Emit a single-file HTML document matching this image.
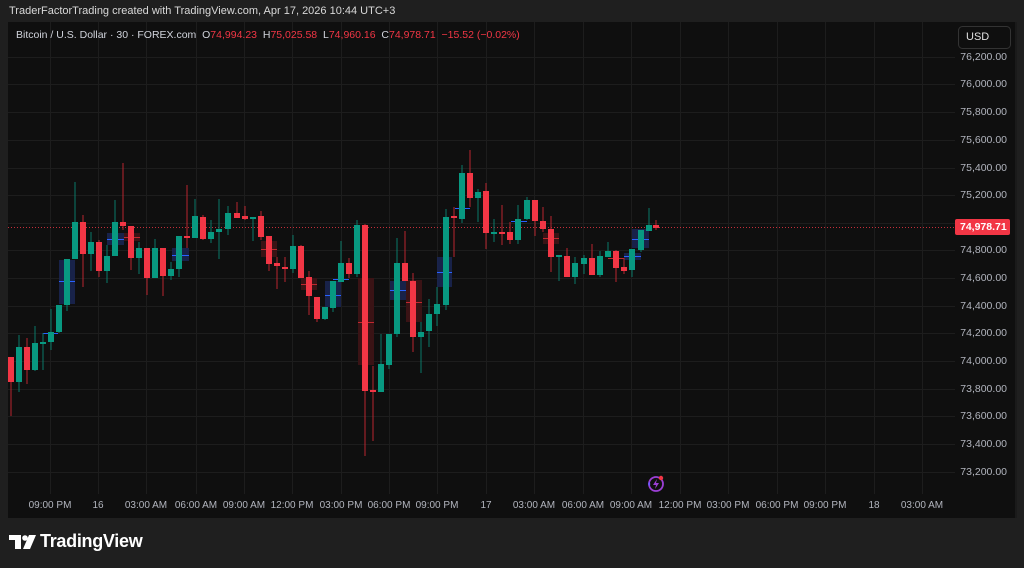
<!DOCTYPE html>
<html><head><meta charset="utf-8"><style>
html,body{margin:0;padding:0;width:1024px;height:568px;background:#1f1f1f;overflow:hidden;font-family:"Liberation Sans",sans-serif}
.t{position:absolute;white-space:nowrap}
</style></head><body>
<div class="t" style="left:9px;top:5px;font-size:11px;color:#d8d8d8">TraderFactorTrading created with TradingView.com, Apr 17, 2026 10:44 UTC+3</div>
<svg style="position:absolute;left:0;top:0" width="1024" height="568">
<rect x="8" y="22" width="1007" height="496" fill="#0f0f0f"/>
<rect x="1015" y="22" width="2" height="496" fill="#1a1a1a"/>
<g stroke="#1d1d1d" stroke-width="1">
<line x1="8" y1="57.5" x2="955" y2="57.5"/><line x1="8" y1="84.5" x2="955" y2="84.5"/><line x1="8" y1="112.5" x2="955" y2="112.5"/><line x1="8" y1="140.5" x2="955" y2="140.5"/><line x1="8" y1="168.5" x2="955" y2="168.5"/><line x1="8" y1="195.5" x2="955" y2="195.5"/><line x1="8" y1="223.5" x2="955" y2="223.5"/><line x1="8" y1="250.5" x2="955" y2="250.5"/><line x1="8" y1="278.5" x2="955" y2="278.5"/><line x1="8" y1="306.5" x2="955" y2="306.5"/><line x1="8" y1="333.5" x2="955" y2="333.5"/><line x1="8" y1="361.5" x2="955" y2="361.5"/><line x1="8" y1="389.5" x2="955" y2="389.5"/><line x1="8" y1="416.5" x2="955" y2="416.5"/><line x1="8" y1="444.5" x2="955" y2="444.5"/><line x1="8" y1="472.5" x2="955" y2="472.5"/>
<line x1="50.5" y1="22" x2="50.5" y2="494"/><line x1="98.5" y1="22" x2="98.5" y2="494"/><line x1="146.5" y1="22" x2="146.5" y2="494"/><line x1="196.5" y1="22" x2="196.5" y2="494"/><line x1="244.5" y1="22" x2="244.5" y2="494"/><line x1="292.5" y1="22" x2="292.5" y2="494"/><line x1="341.5" y1="22" x2="341.5" y2="494"/><line x1="389.5" y1="22" x2="389.5" y2="494"/><line x1="437.5" y1="22" x2="437.5" y2="494"/><line x1="486.5" y1="22" x2="486.5" y2="494"/><line x1="534.5" y1="22" x2="534.5" y2="494"/><line x1="583.5" y1="22" x2="583.5" y2="494"/><line x1="631.5" y1="22" x2="631.5" y2="494"/><line x1="680.5" y1="22" x2="680.5" y2="494"/><line x1="728.5" y1="22" x2="728.5" y2="494"/><line x1="777.5" y1="22" x2="777.5" y2="494"/><line x1="825.5" y1="22" x2="825.5" y2="494"/><line x1="874.5" y1="22" x2="874.5" y2="494"/><line x1="922.5" y1="22" x2="922.5" y2="494"/>
</g>
<!-- boxes -->
<g fill="#1a2550" opacity="0.9">
<rect x="59" y="260" width="16" height="44"/><rect x="107" y="233" width="17" height="12"/><rect x="172" y="248" width="17" height="13"/><rect x="325" y="281" width="16" height="26"/><rect x="390" y="281" width="16" height="19"/><rect x="437" y="257" width="15" height="30"/><rect x="624" y="253" width="17" height="7"/><rect x="632" y="229" width="17" height="19"/>
</g>
<g fill="#2962ff">
<rect x="59" y="281" width="16" height="1"/><rect x="107" y="239" width="17" height="1"/><rect x="172" y="255" width="17" height="1"/><rect x="325" y="295" width="16" height="1"/><rect x="390" y="290" width="16" height="1"/><rect x="437" y="272" width="15" height="1"/><rect x="624" y="256" width="17" height="1"/><rect x="632" y="239" width="17" height="1"/><rect x="333" y="279" width="16" height="1"/><rect x="455" y="208" width="15" height="1"/><rect x="511" y="221" width="16" height="1"/><rect x="43" y="333" width="15" height="1"/>
</g>
<g fill="#3a1315">
<rect x="124" y="233" width="16" height="8"/><rect x="261" y="241" width="16" height="16"/><rect x="301" y="278" width="16" height="12"/><rect x="358" y="278" width="16" height="87"/><rect x="406" y="280" width="16" height="42"/><rect x="543" y="233" width="16" height="11"/>
</g>
<g fill="#c0282f">
<rect x="124" y="237" width="16" height="1"/><rect x="261" y="249" width="16" height="1"/><rect x="301" y="284" width="16" height="1"/><rect x="358" y="322" width="16" height="1"/><rect x="406" y="302" width="16" height="1"/><rect x="543" y="238" width="16" height="1"/><rect x="608" y="258" width="16" height="1"/>
</g>
<line x1="8" y1="227.5" x2="955" y2="227.5" stroke="#f23645" stroke-width="1" stroke-dasharray="1,2" opacity="0.8"/>
<!-- green wicks -->
<g fill="#0a7a68">
<rect x="18.5" y="335" width="1" height="57"/><rect x="34.5" y="326" width="1" height="45"/><rect x="42.5" y="333" width="1" height="37"/><rect x="50.5" y="309" width="1" height="41"/><rect x="58.5" y="305" width="1" height="28"/><rect x="66.5" y="259" width="1" height="52"/><rect x="74.5" y="182" width="1" height="77"/><rect x="90.5" y="232" width="1" height="39"/><rect x="106.5" y="245" width="1" height="38"/><rect x="114.5" y="200" width="1" height="56"/><rect x="138.5" y="242" width="1" height="32"/><rect x="154.5" y="239" width="1" height="39"/><rect x="170.5" y="262" width="1" height="18"/><rect x="178.5" y="236" width="1" height="41"/><rect x="194.5" y="199" width="1" height="39"/><rect x="210.5" y="220" width="1" height="23"/><rect x="218.5" y="199" width="1" height="60"/><rect x="227.5" y="206" width="1" height="29"/><rect x="252.5" y="217" width="1" height="24"/><rect x="292.5" y="235" width="1" height="38"/><rect x="324.5" y="307" width="1" height="13"/><rect x="332.5" y="281" width="1" height="31"/><rect x="340.5" y="241" width="1" height="41"/><rect x="356.5" y="220" width="1" height="57"/><rect x="380.5" y="334" width="1" height="58"/><rect x="388.5" y="334" width="1" height="35"/><rect x="396.5" y="238" width="1" height="99"/><rect x="420.5" y="322" width="1" height="51"/><rect x="428.5" y="299" width="1" height="48"/><rect x="436.5" y="287" width="1" height="39"/><rect x="445.5" y="209" width="1" height="101"/><rect x="461.5" y="165" width="1" height="58"/><rect x="477.5" y="189" width="1" height="33"/><rect x="493.5" y="219" width="1" height="23"/><rect x="517.5" y="205" width="1" height="39"/><rect x="526.5" y="197" width="1" height="23"/><rect x="558.5" y="256" width="1" height="25"/><rect x="574.5" y="257" width="1" height="27"/><rect x="583.5" y="255" width="1" height="19"/><rect x="599.5" y="251" width="1" height="26"/><rect x="607.5" y="242" width="1" height="15"/><rect x="631.5" y="249" width="1" height="28"/><rect x="640.5" y="230" width="1" height="22"/><rect x="648.5" y="208" width="1" height="23"/>
</g>
<g fill="#089981">
<rect x="16" y="347" width="6" height="35"/><rect x="32" y="343" width="6" height="27"/><rect x="40" y="342" width="6" height="2"/><rect x="48" y="332" width="6" height="10"/><rect x="56" y="305" width="6" height="27"/><rect x="64" y="259" width="6" height="46"/><rect x="72" y="222" width="6" height="37"/><rect x="88" y="242" width="6" height="12"/><rect x="104" y="256" width="6" height="15"/><rect x="112" y="222" width="6" height="34"/><rect x="136" y="248" width="6" height="10"/><rect x="152" y="248" width="6" height="30"/><rect x="168" y="269" width="6" height="7"/><rect x="176" y="236" width="6" height="33"/><rect x="192" y="216" width="6" height="22"/><rect x="208" y="232" width="6" height="7"/><rect x="216" y="229" width="6" height="3"/><rect x="225" y="213" width="6" height="16"/><rect x="250" y="217" width="6" height="2"/><rect x="290" y="246" width="6" height="23"/><rect x="322" y="307" width="6" height="12"/><rect x="330" y="281" width="6" height="27"/><rect x="338" y="263" width="6" height="19"/><rect x="354" y="225" width="6" height="49"/><rect x="378" y="364" width="6" height="28"/><rect x="386" y="334" width="6" height="31"/><rect x="394" y="263" width="6" height="71"/><rect x="418" y="332" width="6" height="5"/><rect x="426" y="314" width="6" height="17"/><rect x="434" y="304" width="6" height="10"/><rect x="443" y="217" width="6" height="88"/><rect x="459" y="173" width="6" height="46"/><rect x="475" y="192" width="6" height="6"/><rect x="491" y="232" width="6" height="2"/><rect x="515" y="219" width="6" height="21"/><rect x="524" y="200" width="6" height="19"/><rect x="556" y="255" width="6" height="2"/><rect x="572" y="263" width="6" height="14"/><rect x="581" y="258" width="6" height="6"/><rect x="597" y="256" width="6" height="19"/><rect x="605" y="251" width="6" height="6"/><rect x="629" y="249" width="6" height="21"/><rect x="638" y="230" width="6" height="20"/><rect x="646" y="225" width="6" height="6"/>
</g>
<!-- red -->
<g fill="#b8262f">
<rect x="10.5" y="357" width="1" height="59"/><rect x="26.5" y="338" width="1" height="46"/><rect x="82.5" y="215" width="1" height="72"/><rect x="98.5" y="240" width="1" height="37"/><rect x="122.5" y="163" width="1" height="67"/><rect x="130.5" y="226" width="1" height="44"/><rect x="146.5" y="248" width="1" height="47"/><rect x="162.5" y="248" width="1" height="48"/><rect x="186.5" y="185" width="1" height="63"/><rect x="202.5" y="215" width="1" height="25"/><rect x="236.5" y="202" width="1" height="16"/><rect x="244.5" y="206" width="1" height="14"/><rect x="260.5" y="211" width="1" height="29"/><rect x="268.5" y="236" width="1" height="35"/><rect x="276.5" y="257" width="1" height="32"/><rect x="284.5" y="257" width="1" height="25"/><rect x="300.5" y="245" width="1" height="33"/><rect x="308.5" y="271" width="1" height="44"/><rect x="316.5" y="297" width="1" height="25"/><rect x="348.5" y="258" width="1" height="20"/><rect x="364.5" y="224" width="1" height="232"/><rect x="372.5" y="366" width="1" height="75"/><rect x="404.5" y="231" width="1" height="50"/><rect x="412.5" y="273" width="1" height="79"/><rect x="453.5" y="207" width="1" height="50"/><rect x="469.5" y="150" width="1" height="57"/><rect x="485.5" y="183" width="1" height="66"/><rect x="501.5" y="205" width="1" height="40"/><rect x="509.5" y="222" width="1" height="22"/><rect x="534.5" y="200" width="1" height="36"/><rect x="542.5" y="207" width="1" height="25"/><rect x="550.5" y="216" width="1" height="56"/><rect x="566.5" y="248" width="1" height="29"/><rect x="591.5" y="244" width="1" height="31"/><rect x="615.5" y="250" width="1" height="32"/><rect x="623.5" y="258" width="1" height="16"/><rect x="655.5" y="220" width="1" height="10"/>
</g>
<g fill="#f23645">
<rect x="8" y="357" width="6" height="25"/><rect x="24" y="347" width="6" height="23"/><rect x="80" y="222" width="6" height="32"/><rect x="96" y="242" width="6" height="29"/><rect x="120" y="222" width="6" height="4"/><rect x="128" y="226" width="6" height="32"/><rect x="144" y="248" width="6" height="30"/><rect x="160" y="248" width="6" height="28"/><rect x="184" y="236" width="6" height="2"/><rect x="200" y="217" width="6" height="22"/><rect x="234" y="213" width="6" height="5"/><rect x="242" y="216" width="6" height="3"/><rect x="258" y="216" width="6" height="21"/><rect x="266" y="236" width="6" height="28"/><rect x="274" y="263" width="6" height="3"/><rect x="282" y="267" width="6" height="2"/><rect x="298" y="246" width="6" height="32"/><rect x="306" y="277" width="6" height="19"/><rect x="314" y="297" width="6" height="22"/><rect x="346" y="263" width="6" height="11"/><rect x="362" y="225" width="6" height="166"/><rect x="370" y="390" width="6" height="2"/><rect x="402" y="263" width="6" height="18"/><rect x="410" y="281" width="6" height="56"/><rect x="451" y="216" width="6" height="2"/><rect x="467" y="173" width="6" height="25"/><rect x="483" y="191" width="6" height="42"/><rect x="499" y="232" width="6" height="2"/><rect x="507" y="232" width="6" height="8"/><rect x="532" y="200" width="6" height="21"/><rect x="540" y="221" width="6" height="8"/><rect x="548" y="229" width="6" height="28"/><rect x="564" y="256" width="6" height="21"/><rect x="589" y="258" width="6" height="17"/><rect x="613" y="251" width="6" height="17"/><rect x="621" y="267" width="6" height="4"/><rect x="653" y="225" width="6" height="3"/>
</g>
<!-- lightning icon -->
<circle cx="656" cy="484" r="7" fill="none" stroke="#9c3fd6" stroke-width="1.8"/>
<path d="M657 479 L653 485 L656 485 L655 489 L659 483 L656 483 Z" fill="#9c3fd6"/>
<circle cx="661" cy="478" r="2.2" fill="#f23645"/>
<path d="M648 484 l1.2 -2.5 1.2 2.5 -1.2 2.5z" fill="#6a5bff"/>
<rect x="955" y="219" width="55" height="16" rx="2" fill="#f23645"/>
<rect x="958.5" y="26.5" width="52" height="22" rx="4" fill="#0f0f0f" stroke="#333" stroke-width="1"/>
</svg>
<div class="t" style="left:16px;top:29px;font-size:10.5px;color:#d1d4dc">Bitcoin / U.S. Dollar · 30 · FOREX.com&nbsp; O<span style="color:#f23645">74,994.23</span>&nbsp; H<span style="color:#f23645">75,025.58</span>&nbsp; L<span style="color:#f23645">74,960.16</span>&nbsp; C<span style="color:#f23645">74,978.71</span>&nbsp; <span style="color:#f23645">−15.52 (−0.02%)</span></div>
<div class="t" style="left:966px;top:31px;font-size:11px;color:#e0e0e0">USD</div>
<div style="position:absolute;left:955px;top:51px;width:52px;font-size:10.5px;color:#b2b5be;text-align:right;line-height:12px">
<div style="position:absolute;right:0;top:0">76,200.00</div><div style="position:absolute;right:0;top:27px">76,000.00</div><div style="position:absolute;right:0;top:55px">75,800.00</div><div style="position:absolute;right:0;top:83px">75,600.00</div><div style="position:absolute;right:0;top:111px">75,400.00</div><div style="position:absolute;right:0;top:138px">75,200.00</div><div style="position:absolute;right:0;top:193px">74,800.00</div><div style="position:absolute;right:0;top:221px">74,600.00</div><div style="position:absolute;right:0;top:249px">74,400.00</div><div style="position:absolute;right:0;top:276px">74,200.00</div><div style="position:absolute;right:0;top:304px">74,000.00</div><div style="position:absolute;right:0;top:332px">73,800.00</div><div style="position:absolute;right:0;top:359px">73,600.00</div><div style="position:absolute;right:0;top:387px">73,400.00</div><div style="position:absolute;right:0;top:415px">73,200.00</div>
</div>
<div class="t" style="left:960px;top:221px;font-size:10.5px;color:#fff;font-weight:bold">74,978.71</div>
<div style="position:absolute;left:0;top:500px;font-size:10px;color:#b2b5be;line-height:12px">
<div class="t" style="left:50px;transform:translateX(-50%)">09:00 PM</div><div class="t" style="left:98px;transform:translateX(-50%)">16</div><div class="t" style="left:146px;transform:translateX(-50%)">03:00 AM</div><div class="t" style="left:196px;transform:translateX(-50%)">06:00 AM</div><div class="t" style="left:244px;transform:translateX(-50%)">09:00 AM</div><div class="t" style="left:292px;transform:translateX(-50%)">12:00 PM</div><div class="t" style="left:341px;transform:translateX(-50%)">03:00 PM</div><div class="t" style="left:389px;transform:translateX(-50%)">06:00 PM</div><div class="t" style="left:437px;transform:translateX(-50%)">09:00 PM</div><div class="t" style="left:486px;transform:translateX(-50%)">17</div><div class="t" style="left:534px;transform:translateX(-50%)">03:00 AM</div><div class="t" style="left:583px;transform:translateX(-50%)">06:00 AM</div><div class="t" style="left:631px;transform:translateX(-50%)">09:00 AM</div><div class="t" style="left:680px;transform:translateX(-50%)">12:00 PM</div><div class="t" style="left:728px;transform:translateX(-50%)">03:00 PM</div><div class="t" style="left:777px;transform:translateX(-50%)">06:00 PM</div><div class="t" style="left:825px;transform:translateX(-50%)">09:00 PM</div><div class="t" style="left:874px;transform:translateX(-50%)">18</div><div class="t" style="left:922px;transform:translateX(-50%)">03:00 AM</div>
</div>
<svg style="position:absolute;left:9px;top:535px" width="28" height="16"><path d="M0 0H12V14H6V5H0Z" fill="#fff"/><circle cx="16" cy="3" r="2.8" fill="#fff"/><path d="M20 0H27L21 14H14Z" fill="#fff"/></svg>
<div class="t" style="left:40px;top:531px;font-size:18px;color:#fff;font-weight:bold;letter-spacing:-0.3px">TradingView</div>
</body></html>
